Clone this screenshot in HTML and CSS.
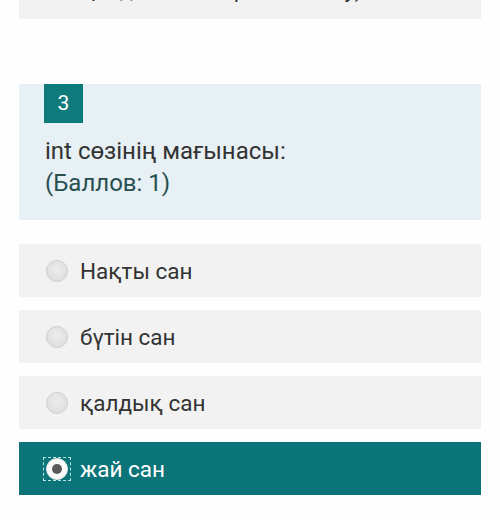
FILE: index.html
```html
<!DOCTYPE html>
<html lang="kk">

<head>
    <meta charset="UTF-8">
    <title>Тест</title>
    <link rel="stylesheet" href="styles.css">
</head>

<body>
    <div class="page">
        <div class="answer prev">
            <span class="answer-text">қандағанын жұмыс жасау)</span>
        </div>

        <div class="question">
            <div class="badge">3</div>
            <div class="question-text">
                int сөзінің мағынасы:<br>
                <span class="points">(Баллов: 1)</span>
            </div>
        </div>

        <div class="answers">
            <label class="answer">
                <span class="radio"></span>
                <span class="answer-text">Нақты сан</span>
            </label>
            <label class="answer">
                <span class="radio"></span>
                <span class="answer-text">бүтін сан</span>
            </label>
            <label class="answer">
                <span class="radio"></span>
                <span class="answer-text">қалдық сан</span>
            </label>
            <label class="answer selected">
                <span class="focus"><span class="radio checked"></span></span>
                <span class="answer-text">жай сан</span>
            </label>
        </div>
    </div>
</body>

</html>
```

FILE: styles.css
```css
* {
    margin: 0;
    padding: 0;
    box-sizing: border-box;
}

body {
    background: #fefefe;
    font-family: Roboto, "Noto Sans", sans-serif;
    color: #333;
}

.page {
    padding: 0 19px;
    margin-top: -37px;
}

.answer {
    display: flex;
    align-items: center;
    height: 53px;
    padding-left: 27px;
    background: #f2f2f2;
    font-size: 22.5px;
}

.prev {
    height: 56px;
    padding-left: 63px;
    padding-bottom: 3px;
    font-size: 22px;
}

.answer-text {
    margin-left: 12px;
}

.prev .answer-text {
    margin-left: 0;
}

.question {
    margin-top: 65px;
    height: 136px;
    padding: 0 26px;
    background: #e7f0f4;
}

.badge {
    width: 39px;
    height: 39px;
    margin-left: -1px;
    background: #0f7a7c;
    color: #fff;
    font-size: 21px;
    line-height: 39px;
    text-align: center;
}

.question-text {
    margin-top: 12px;
    font-size: 24px;
    line-height: 32px;
    color: #333;
}

.points {
    color: #274f50;
}

.answers {
    display: flex;
    flex-direction: column;
    gap: 13px;
    margin-top: 24px;
}

.radio {
    display: block;
    width: 22px;
    height: 22px;
    border-radius: 50%;
    border: 1px solid #cfcfcf;
    background: radial-gradient(circle at 50% 40%, #ececec, #dadada);
}

.selected {
    background: #0a7478;
    color: #fff;
}

.focus {
    display: flex;
    align-items: center;
    justify-content: center;
    width: 28px;
    height: 24px;
    margin-left: -3px;
    margin-right: -3px;
    border: 1px dashed #b8e6e6;
}

.radio.checked {
    position: relative;
    background: #fbfbfb;
    border-color: #e6e6e6;
}

.radio.checked::after {
    content: "";
    position: absolute;
    left: 5px;
    top: 5px;
    width: 10px;
    height: 10px;
    border-radius: 50%;
    background: #5a5a5a;
}
```
